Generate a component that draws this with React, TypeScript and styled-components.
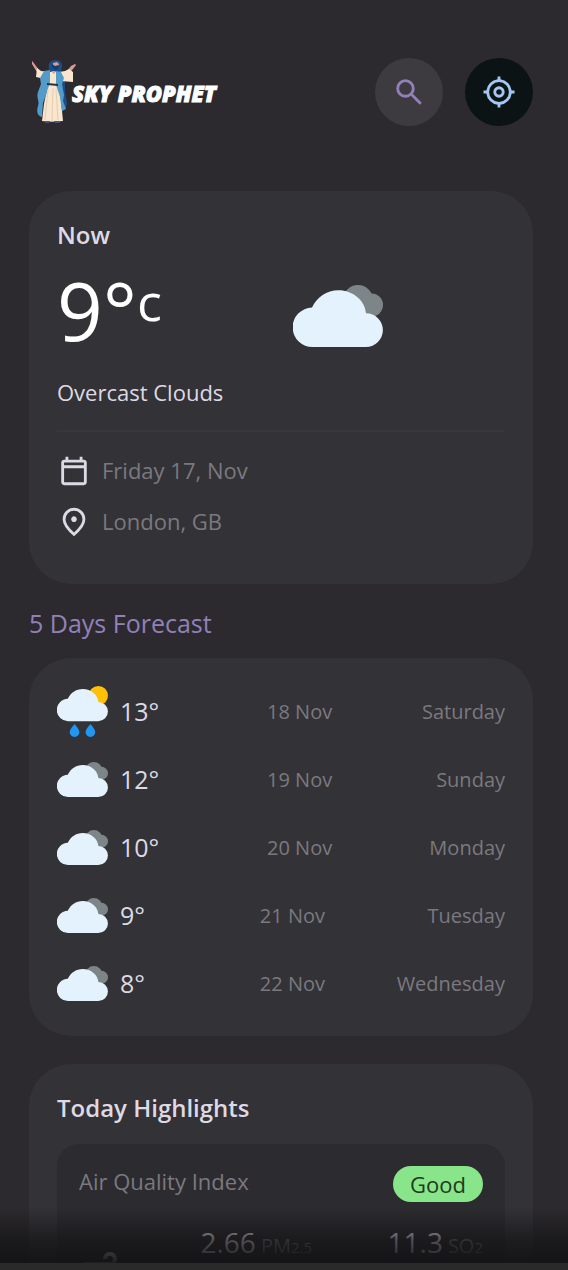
import React from "react";
import styled, { createGlobalStyle } from "styled-components";

const GlobalStyle = createGlobalStyle`
  *, *::before, *::after { box-sizing: border-box; }
  body {
    margin: 0;
    background: #2c2a2e;
    color: #dddae5;
    font-family: "Open Sans", sans-serif;
  }
  h1, h2, h3, p, ul, ol { margin: 0; padding: 0; }
  ul, ol { list-style: none; }
`;

const Shell = styled.div`
  height: 100vh;
  display: flex;
  flex-direction: column;
  background: #2a2a2a;
`;

const Viewport = styled.div`
  position: relative;
  flex: 1;
  min-height: 0;
  margin-bottom: 7px;
  background: #2c2a2e;
`;

const Scroller = styled.div`
  height: 100%;
  overflow-y: auto;
  scrollbar-width: none;
  padding: 58px 35px 28px 29px;
`;

const BottomFade = styled.div`
  position: absolute;
  left: 0;
  right: 0;
  bottom: 0;
  height: 56px;
  background: linear-gradient(180deg, rgba(19, 18, 20, 0), rgba(19, 18, 20, 0.7) 60%, rgba(19, 18, 20, 0.95));
  pointer-events: none;
`;

const Header = styled.header`
  display: flex;
  align-items: center;
  justify-content: space-between;
  margin-bottom: 65px;
`;

const LogoLink = styled.a`
  display: flex;
  align-items: center;
  color: #fff;
  text-decoration: none;
`;

const LogoName = styled.span`
  font: italic 800 22px/32px "Open Sans", sans-serif;
  -webkit-text-stroke: 1px #fff;
  padding-top: 2px;
  margin-left: -4px;
`;

const Actions = styled.div`
  display: flex;
  gap: 22px;
`;

const RoundButton = styled.button<{ $bg: string; $fg: string }>`
  display: grid;
  place-items: center;
  width: 68px;
  height: 68px;
  padding: 0;
  border: 0;
  border-radius: 50%;
  background: ${(p) => p.$bg};
  color: ${(p) => p.$fg};
  cursor: pointer;
`;

const Card = styled.section`
  padding: 28px;
  border-radius: 42px;
  background: #333236;
`;

const CardTitle = styled.h2`
  font-size: 24px;
  line-height: 32px;
  font-weight: 600;
`;

const NowRow = styled.div`
  display: flex;
  align-items: center;
  gap: 9px;
  margin-top: 20px;
`;

const Temperature = styled.p`
  display: flex;
  padding-bottom: 12px;
  color: #fff;
  font-size: 80px;
  line-height: 78px;
`;

const Unit = styled.span`
  font-size: 52px;
  line-height: 60px;
`;

const NowIcon = styled.div`
  flex: 1;
  display: flex;
  justify-content: center;
`;

const Condition = styled.p`
  margin-top: 15px;
  font-size: 22px;
  line-height: 32px;
`;

const Meta = styled.ul`
  display: grid;
  gap: 17px;
  margin-top: 22px;
  padding: 22px 0 17px;
  border-top: 2px solid #38373b;
`;

const MetaItem = styled.li`
  display: flex;
  align-items: center;
  gap: 11px;
  height: 34px;
  font-size: 22px;
  line-height: 32px;
  color: #7b7980;

  svg { color: #dddae5; }
`;

const MetaText = styled.span`
  padding-bottom: 2px;
`;

const SectionTitle = styled.h2`
  margin: 23px 0 18px;
  font-size: 25px;
  line-height: 33px;
  font-weight: 400;
  color: #9281b8;
`;

const ForecastList = styled.ul`
  display: grid;
  gap: 18px;
`;

const ForecastRow = styled.li`
  display: flex;
  align-items: center;
  height: 50px;
`;

const ForecastTemp = styled.div`
  display: flex;
  align-items: center;
  gap: 12px;
  font-size: 25px;
`;

const ForecastText = styled.span`
  flex: 1;
  text-align: right;
  font-size: 20px;
  color: #7b7980;
`;

const Highlights = styled(Card)`
  margin-top: 28px;
`;

const InnerCard = styled.div`
  margin-top: 20px;
  padding: 22px;
  border-radius: 22px;
  background: #2c2b2f;
`;

const InnerHead = styled.div`
  display: flex;
  align-items: flex-start;
  justify-content: space-between;
`;

const InnerTitle = styled.h3`
  font-size: 22px;
  line-height: 30px;
  font-weight: 400;
  color: #7b7980;
`;

const Badge = styled.span`
  padding: 0 17px;
  border-radius: 18px;
  background: #89e589;
  color: #1f3a1f;
  font-size: 22px;
  line-height: 36px;
`;

const AirRow = styled.div`
  display: flex;
  align-items: flex-start;
  gap: 22px;
  margin-top: 20px;

  svg { margin-top: 24px; }
`;

const AirList = styled.ul`
  flex: 1;
  display: grid;
  grid-template-columns: 1fr 1fr;
  gap: 20px 8px;
`;

const AirItem = styled.li`
  display: flex;
  align-items: baseline;
  justify-content: flex-end;
  gap: 5px;
  font-size: 28px;
  line-height: 40px;
`;

const AirLabel = styled.span`
  font-size: 20px;
  color: #7b7980;

  sub { font-size: 15px; line-height: 1; vertical-align: baseline; }
`;

const ICONS = {
  search:
    "M784-120 532-372q-30 24-69 38t-83 14q-109 0-184.5-75.5T120-580q0-109 75.5-184.5T380-840q109 0 184.5 75.5T640-580q0 44-14 83t-38 69l252 252-56 56ZM380-400q75 0 127.5-52.5T560-580q0-75-52.5-127.5T380-760q-75 0-127.5 52.5T200-580q0 75 52.5 127.5T380-400Z",
  locate:
    "M440-42v-80q-125-14-214.5-103.5T122-440H42v-80h80q14-125 103.5-214.5T440-838v-80h80v80q125 14 214.5 103.5T838-520h80v80h-80q-14 125-103.5 214.5T520-122v80h-80Zm40-158q116 0 198-82t82-198q0-116-82-198t-198-82q-116 0-198 82t-82 198q0 116 82 198t198 82Zm0-120q-66 0-113-47t-47-113q0-66 47-113t113-47q66 0 113 47t47 113q0 66-47 113t-113 47Zm0-80q33 0 56.5-23.5T560-480q0-33-23.5-56.5T480-560q-33 0-56.5 23.5T400-480q0 33 23.5 56.5T480-400Z",
  calendar:
    "M200-80q-33 0-56.5-23.5T120-160v-560q0-33 23.5-56.5T200-800h40v-80h80v80h320v-80h80v80h40q33 0 56.5 23.5T840-720v560q0 33-23.5 56.5T760-80H200Zm0-80h560v-400H200v400Zm0-480h560v-80H200v80Z",
  pin:
    "M480-186q122-112 181-203.5T720-552q0-109-69.5-178.5T480-800q-101 0-170.5 69.5T240-552q0 71 59 162.5T480-186Zm0 106Q319-217 239.5-334.5T160-552q0-150 96.5-239T480-880q127 0 223.5 89T800-552q0 100-79.5 217.5T480-80Zm0-400q33 0 56.5-23.5T560-560q0-33-23.5-56.5T480-640q-33 0-56.5 23.5T400-560q0 33 23.5 56.5T480-480Z",
  air:
    "M460-160q-50 0-85-35t-35-85h80q0 17 11.5 28.5T460-240q17 0 28.5-11.5T500-280q0-17-11.5-28.5T460-320H80v-80h380q50 0 85 35t35 85q0 50-35 85t-85 35ZM80-560v-80h540q26 0 43-17t17-43q0-26-17-43t-43-17q-26 0-43 17t-17 43h-80q0-59 40.5-99.5T620-840q59 0 99.5 40.5T760-700q0 59-40.5 99.5T620-560H80Z",
};

function Icon({ name, size = 34 }: { name: keyof typeof ICONS; size?: number }) {
  return (
    <svg width={size} height={size} viewBox="0 -960 960 960" fill="currentColor" aria-hidden="true">
      <path d={ICONS[name]} />
    </svg>
  );
}

type Weather = "clouds" | "rain";

function WeatherIcon({ kind, size }: { kind: Weather; size: number }) {
  const top = kind === "clouds" ? -14 : 0;
  return (
    <svg width={size} height={size} viewBox={`0 ${top} 90 90`} aria-hidden="true">
      {kind === "clouds" ? (
        <g fill="#7e8589">
          <circle cx="65" cy="15" r="15" />
          <circle cx="78.500" cy="20" r="11.500" />
        </g>
      ) : (
        <circle cx="73" cy="17" r="17" fill="#ffc107" />
      )}
      <path
        fill="#e3f2fd"
        d="M19.700 62A19.700 19.700 0 0 1 19 22.600C24 12 33.500 5.200 45.500 5.200C60.500 5.200 72 16 73 28.200A16.900 16.900 0 0 1 73 62Z"
      />
      {kind === "rain" && (
        <g fill="#2196f3">
          <path d="M31 67C33 70 39.500 76 39.500 81.500a8.500 8.500 0 0 1-17 0C22.500 76 29 70 31 67Z" />
          <path d="M59 67C61 70 67.500 76 67.500 81.500a8.500 8.500 0 0 1-17 0C50.500 76 57 70 59 67Z" />
        </g>
      )}
    </svg>
  );
}

function Prophet() {
  return (
    <svg width="47" height="66" viewBox="0 -2 47 66" aria-hidden="true">
      <path d="M31 14l5 5 0 12 2 11-1 5-4 3-4-30Z" fill="#1d4f86" />
      <path d="M10 9L7 5 4 1 3 0l0 3 3 5 2 3ZM38 10l4-5 4-2 1 1-3 4-4 4Z" fill="#d99a96" />
      <path d="M20 3c1-3 4-4 7-4 4 0 6 3 6 6l-1 6 1 4-6 1-7-4-1-2c2-2 0-4 1-7Z" fill="#1d4f86" />
      <path d="M24 2l4-1 2 2-1 3-3 1-2-2Z" fill="#d99a96" />
      <path d="M23 3l3 2 4-1-1 4-3 1-3-3Z" fill="#163f6f" />
      <path d="M8 7l4 3 10 1 8 0 6-1 4-2 4 3 0 10-12-1-2 4H18l-2-6-9-2Z" fill="#f8e6cf" />
      <path d="M20 18h9l3 22 2 20c-7 1-14 1-21 0l2-17Z" fill="#f8e6cf" />
      <path d="M15 10l6-1 0 12-3 10-4 11-1 14c-4-1-6-5-4-11 2-5-2-8 0-14l3-8-1-6Z" fill="#539cc9" />
      <path d="M27 10l5 1 3 6-2 6 2 11-1 6 3 8-4 2-2-14-4-12Z" fill="#539cc9" />
      <path d="M18 22l11 1v2l-11-1Z" fill="#29313d" />
      <path d="M19 28l-3 31M24 27l-1 33M27 28l2 31" stroke="#e6cdb2" fill="none" />
      <path d="M16 60h5l-1 2h-4ZM25 60h5l1 2h-5Z" fill="#44537f" />
      <path d="M22 10h5l-2 3Z" fill="#d99a96" />
    </svg>
  );
}

const FORECAST: { kind: Weather; temp: string; date: string; day: string }[] = [
  { kind: "rain", temp: "13°", date: "18 Nov", day: "Saturday" },
  { kind: "clouds", temp: "12°", date: "19 Nov", day: "Sunday" },
  { kind: "clouds", temp: "10°", date: "20 Nov", day: "Monday" },
  { kind: "clouds", temp: "9°", date: "21 Nov", day: "Tuesday" },
  { kind: "clouds", temp: "8°", date: "22 Nov", day: "Wednesday" },
];

const AIR = [
  { value: "2.66", label: "PM", sub: "2.5" },
  { value: "11.3", label: "SO", sub: "2" },
];

export default function App() {
  return (
    <Shell>
      <GlobalStyle />
      <Viewport>
        <Scroller>
          <Header>
            <LogoLink href="#">
              <Prophet />
              <LogoName>SKY PROPHET</LogoName>
            </LogoLink>
            <Actions>
              <RoundButton type="button" aria-label="Search" $bg="#3e3b40" $fg="#9281b8">
                <Icon name="search" />
              </RoundButton>
              <RoundButton type="button" aria-label="Use current location" $bg="#0b1315" $fg="#a3c7ef">
                <Icon name="locate" />
              </RoundButton>
            </Actions>
          </Header>
          <main>
            <Card>
              <CardTitle>Now</CardTitle>
              <NowRow>
                <Temperature>
                  9°<Unit>c</Unit>
                </Temperature>
                <NowIcon>
                  <WeatherIcon kind="clouds" size={90} />
                </NowIcon>
              </NowRow>
              <Condition>Overcast Clouds</Condition>
              <Meta>
                <MetaItem>
                  <Icon name="calendar" />
                  <MetaText>Friday 17, Nov</MetaText>
                </MetaItem>
                <MetaItem>
                  <Icon name="pin" />
                  <MetaText>London, GB</MetaText>
                </MetaItem>
              </Meta>
            </Card>
            <SectionTitle>5 Days Forecast</SectionTitle>
            <Card>
              <ForecastList>
                {FORECAST.map((f) => (
                  <ForecastRow key={f.date}>
                    <ForecastTemp>
                      <WeatherIcon kind={f.kind} size={51} />
                      {f.temp}
                    </ForecastTemp>
                    <ForecastText>{f.date}</ForecastText>
                    <ForecastText>{f.day}</ForecastText>
                  </ForecastRow>
                ))}
              </ForecastList>
            </Card>
            <Highlights>
              <CardTitle>Today Highlights</CardTitle>
              <InnerCard>
                <InnerHead>
                  <InnerTitle>Air Quality Index</InnerTitle>
                  <Badge>Good</Badge>
                </InnerHead>
                <AirRow>
                  <Icon name="air" size={48} />
                  <AirList>
                    {AIR.map((a) => (
                      <AirItem key={a.label}>
                        {a.value}
                        <AirLabel>
                          {a.label}
                          <sub>{a.sub}</sub>
                        </AirLabel>
                      </AirItem>
                    ))}
                  </AirList>
                </AirRow>
              </InnerCard>
            </Highlights>
          </main>
        </Scroller>
        <BottomFade />
      </Viewport>
    </Shell>
  );
}
